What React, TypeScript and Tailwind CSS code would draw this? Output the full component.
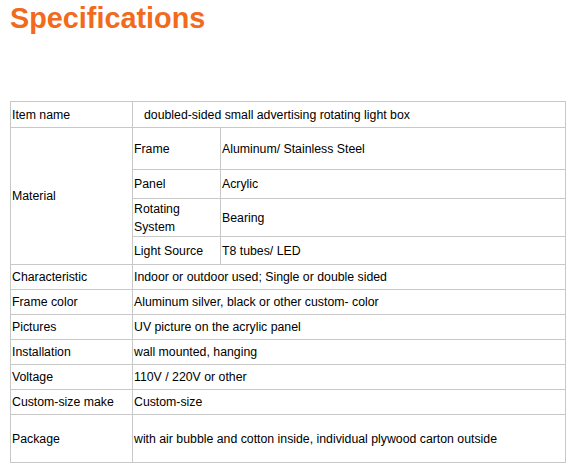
const rows: [string, string][] = [
  ["Characteristic", "Indoor or outdoor used; Single or double sided"],
  ["Frame color", "Aluminum silver, black or other custom- color"],
  ["Pictures", "UV picture on the acrylic panel"],
  ["Installation", "wall mounted, hanging"],
  ["Voltage", "110V / 220V or other"],
  ["Custom-size make", "Custom-size"],
];

const cell = "border border-[#c8c8c8] px-[1px] py-0 align-middle text-left font-normal";

export default function App() {
  return (
    <div className="w-[579px] h-[475px] bg-white text-black" style={{ fontFamily: '"Liberation Sans", Arial, sans-serif' }}>
      <h1 className="pl-[10px] pt-[4px] text-[28.8px] leading-[28px] font-bold text-[#f26a1b]">Specifications</h1>
      <table className="ml-[10px] mt-[69px] w-[556px] border-collapse text-[12.3px] leading-[18px] table-fixed">
        <colgroup>
          <col className="w-[122px]" />
          <col className="w-[88px]" />
          <col />
        </colgroup>
        <tbody>
          <tr className="h-[26px]">
            <td className={cell}>Item name</td>
            <td className={`${cell} pl-[11px]`} colSpan={2}>doubled-sided small advertising rotating light box</td>
          </tr>
          <tr className="h-[42px]">
            <td className={cell} rowSpan={4}>Material</td>
            <td className={cell}>Frame</td>
            <td className={cell}>Aluminum/ Stainless Steel</td>
          </tr>
          <tr className="h-[29px]">
            <td className={cell}>Panel</td>
            <td className={cell}>Acrylic</td>
          </tr>
          <tr className="h-[38px]">
            <td className={cell}>Rotating System</td>
            <td className={cell}>Bearing</td>
          </tr>
          <tr className="h-[28px]">
            <td className={cell}>Light Source</td>
            <td className={cell}>T8 tubes/ LED</td>
          </tr>
          {rows.map(([k, v]) => (
            <tr key={k} className="h-[25px]">
              <td className={cell}>{k}</td>
              <td className={cell} colSpan={2}>{v}</td>
            </tr>
          ))}
          <tr className="h-[48px]">
            <td className={cell}>Package</td>
            <td className={cell} colSpan={2}>with air bubble and cotton inside, individual plywood carton outside</td>
          </tr>
        </tbody>
      </table>
    </div>
  );
}
